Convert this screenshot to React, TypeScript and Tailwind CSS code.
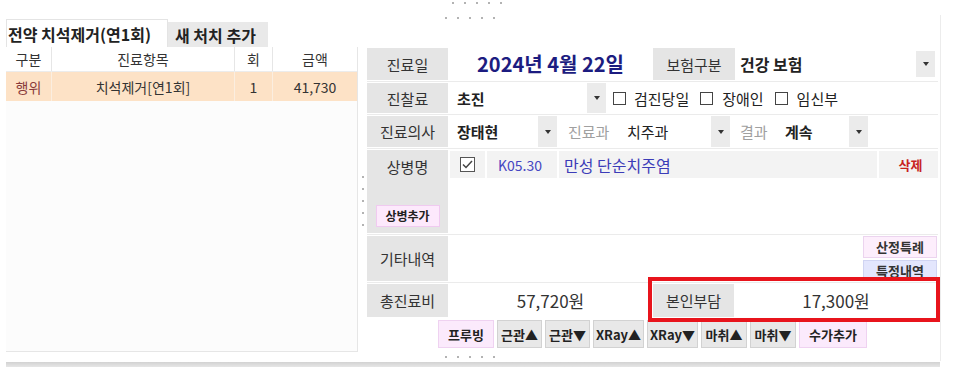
import React from 'react';

const font = { fontFamily: '"Noto Sans CJK KR", "Noto Sans", sans-serif' };

function Dots({ vertical = false }: { vertical?: boolean }) {
  return (
    <div className={vertical ? 'flex flex-col gap-[10px]' : 'flex gap-[10px]'}>
      {[0, 1, 2, 3, 4].map((i) => (
        <span key={i} className="block w-[2px] h-[2px] rounded-full bg-[#9a9a9a]" />
      ))}
    </div>
  );
}

function DropBox({ className = '' }: { className?: string }) {
  return (
    <div className={`w-[19px] self-stretch bg-[#ebebeb] flex items-center justify-center ${className}`}>
      <svg width="6" height="4" viewBox="0 0 6 4">
        <path d="M0 0 H6 L3 4 Z" fill="#333" />
      </svg>
    </div>
  );
}

function Check({ checked = false }: { checked?: boolean }) {
  if (checked) {
    return (
      <div className="w-[15px] h-[15px] border-[1.5px] border-[#555] bg-white flex items-center justify-center">
        <svg width="11" height="9" viewBox="0 0 11 9">
          <path d="M1 4.5 L4 7.5 L10 1" stroke="#444" strokeWidth="1.5" fill="none" />
        </svg>
      </div>
    );
  }
  return <div className="w-[13px] h-[13px] border-[1.5px] border-[#444] bg-white" />;
}

function Label({ children, wide = false }: { children: React.ReactNode; wide?: boolean }) {
  return (
    <div
      className={`${wide ? 'w-[82px]' : 'w-[81px]'} self-stretch bg-[#e5e5e5] flex items-center justify-center text-[15px] text-[#333]`}
    >
      {children}
    </div>
  );
}

const toolButtons = [
  { t: '프루빙', w: 'w-[56px]', pink: true },
  { t: '근관▲', w: 'w-[45px]' },
  { t: '근관▼', w: 'w-[45px]' },
  { t: 'XRay▲', w: 'w-[51px]' },
  { t: 'XRay▼', w: 'w-[51px]' },
  { t: '마취▲', w: 'w-[46px]' },
  { t: '마취▼', w: 'w-[46px]' },
  { t: '수가추가', w: 'w-[68px]', pink: true },
];

export default function App() {
  return (
    <div style={font} className="relative w-[966px] h-[377px] bg-white flex flex-col overflow-hidden text-[#333] leading-none">
      {/* top grip */}
      <div className="h-[15px] pl-[452px] pt-[2px]">
        <Dots />
      </div>

      <div className="flex h-[346px]">
        {/* left: treatment list */}
        <div className="w-[358px] pl-[6px] flex flex-col">
          <div className="mt-[4px] h-[28px] flex items-end">
            <div className="w-[162px] h-[28px] bg-white border border-b-0 border-[#e4e4e4] flex items-center pl-[1px] text-[16px] font-bold text-[#222]">
              전약 치석제거(연1회)
            </div>
            <div className="w-[100px] h-[25px] bg-[#e9e9e9] flex items-center pl-[7px] text-[16px] font-bold text-[#222]">
              새 처치 추가
            </div>
          </div>
          <div className="h-[305px] bg-[#fcfcfc] border-r border-b border-[#e6e6e6] flex flex-col">
            <div className="h-[25px] flex bg-white border-b border-[#ececec] text-[14px] text-[#333]">
              <div className="w-[46px] flex items-center justify-center border-r border-[#e6e6e6]">구분</div>
              <div className="w-[183px] flex items-center justify-center border-r border-[#e6e6e6]">진료항목</div>
              <div className="w-[38px] flex items-center justify-center border-r border-[#e6e6e6]">회</div>
              <div className="flex-1 flex items-center justify-center">금액</div>
            </div>
            <div className="h-[29px] flex bg-[#fde2c6] text-[14px] text-[#333]">
              <div className="w-[46px] flex items-center justify-center border-r border-[#fbeee0] text-[#8a3a3a]">행위</div>
              <div className="w-[183px] flex items-center justify-center border-r border-[#fbeee0]">치석제거[연1회]</div>
              <div className="w-[38px] flex items-center justify-center border-r border-[#fbeee0]">1</div>
              <div className="flex-1 flex items-center justify-center">41,730</div>
            </div>
          </div>
        </div>

        {/* splitter */}
        <div className="w-[8px] pl-[4px] pt-[161px]">
          <Dots vertical />
        </div>

        {/* right: visit detail */}
        <div className="w-[575px] border-r border-[#ececec] flex flex-col pl-[1px] pr-[2px]">
          <div className="h-[32px] pl-[78px] pt-[2px]">
            <Dots />
          </div>

          {/* 진료일 */}
          <div className="h-[35px] flex py-[1px] border-b border-[#ebebeb]">
            <Label>진료일</Label>
            <div className="w-[205px] flex items-center justify-center text-[20px] font-bold text-[#1c1c80]">
              2024년 4월 22일
            </div>
            <Label wide>보험구분</Label>
            <div className="flex-1 flex items-center pl-[5px] text-[16px] font-bold text-[#222]">건강 보험</div>
            <DropBox className="my-[3px] mr-[3px]" />
          </div>

          {/* 진찰료 */}
          <div className="h-[33px] flex py-[1px] border-b border-[#ebebeb]">
            <Label>진찰료</Label>
            <div className="w-[158px] flex">
              <div className="flex-1 flex items-center pl-[9px] text-[15px] font-bold text-[#222]">초진</div>
              <DropBox />
            </div>
            <div className="flex items-center pl-[7px] text-[15px] text-[#222]">
              <Check />
              <span className="ml-[8px]">검진당일</span>
              <span className="ml-[11px]"><Check /></span>
              <span className="ml-[9px]">장애인</span>
              <span className="ml-[11px]"><Check /></span>
              <span className="ml-[9px]">임신부</span>
            </div>
          </div>

          {/* 진료의사 */}
          <div className="h-[34px] flex py-[1px] border-b border-[#ebebeb]">
            <Label>진료의사</Label>
            <div className="w-[109px] flex">
              <div className="flex-1 flex items-center pl-[9px] text-[15px] font-bold text-[#222]">장태현</div>
              <DropBox />
            </div>
            <div className="flex items-center pl-[11px] w-[70px] text-[15px] text-[#a0a0a0]">진료과</div>
            <div className="w-[103px] flex">
              <div className="flex-1 flex items-center text-[15px] text-[#222]">치주과</div>
              <DropBox />
            </div>
            <div className="flex items-center pl-[10px] w-[55px] text-[15px] text-[#a0a0a0]">결과</div>
            <div className="w-[83px] flex">
              <div className="flex-1 flex items-center text-[15px] font-semibold text-[#222]">계속</div>
              <DropBox />
            </div>
          </div>

          {/* 상병명 */}
          <div className="h-[86px] flex py-[1px] border-b border-[#ebebeb]">
            <div className="w-[81px] self-stretch bg-[#e5e5e5] flex flex-col items-center justify-between pt-[9px] pb-[6px] text-[15px] text-[#333]">
              <span>상병명</span>
              <span className="w-[64px] h-[22px] bg-[#fde9fc] border border-[#f0caf0] flex items-center justify-center text-[12px] font-bold text-[#222]">
                상병추가
              </span>
            </div>
            <div className="flex-1 pl-[2px] pt-[1px]">
              <div className="h-[27px] flex gap-[2px]">
                <div className="w-[35px] bg-[#f3f3f3] flex items-center justify-center">
                  <Check checked />
                </div>
                <div className="w-[70px] bg-[#f3f3f3] flex items-center pl-[11px] text-[14px] text-[#4646c2]">K05.30</div>
                <div className="flex-1 bg-[#f3f3f3] flex items-center pl-[5px] text-[16px] text-[#3c3cb8]">만성 단순치주염</div>
                <div className="w-[59px] bg-[#f3f3f3] flex items-center justify-center pl-[4px] text-[13px] font-bold text-[#c8231e]">
                  삭제
                </div>
              </div>
            </div>
          </div>

          {/* 기타내역 */}
          <div className="h-[48px] flex py-[1px] border-b border-[#ebebeb]">
            <Label>기타내역</Label>
            <div className="flex-1 flex flex-col items-end gap-[2px] pr-[1px]">
              <div className="w-[74px] h-[22px] bg-[#fdeefc] border border-[#ecd4ef] flex items-center justify-center text-[13px] font-bold text-[#333]">
                산정특례
              </div>
              <div className="w-[74px] h-[22px] bg-[#e3e6fd] border border-[#d0d4f2] flex items-center justify-center text-[13px] font-bold text-[#333]">
                특정내역
              </div>
            </div>
          </div>

          {/* 총진료비 */}
          <div className="h-[35px] flex py-[1px]">
            <Label>총진료비</Label>
            <div className="w-[205px] flex items-center justify-center text-[17px] text-[#333]">57,720원</div>
            <Label>본인부담</Label>
            <div className="flex-1 flex items-center justify-center text-[17px] text-[#333]">17,300원</div>
          </div>

          {/* tool buttons */}
          <div className="mt-[2px] h-[28px] flex gap-[3px] pl-[71px]">
            {toolButtons.map((b) => (
              <div
                key={b.t}
                className={`${b.w} h-full flex items-center justify-center text-[13px] font-bold text-[#222] border ${
                  b.pink ? 'bg-[#fbeafc] border-[#efd2f1]' : 'bg-[#e8e8e8] border-[#d2d2d2]'
                }`}
              >
                {b.t}
              </div>
            ))}
          </div>

          <div className="mt-[8px] pl-[78px]">
            <Dots />
          </div>
        </div>
      </div>

      {/* bottom bar */}
      <div className="ml-[6px] mt-[1px] w-[934px] h-[5px] bg-gradient-to-b from-[#d2d2d2] to-[#e6e6e6]" />

      {/* highlight box */}
      <div className="absolute left-[648px] top-[277px] w-[292px] h-[45px] border-[4px] border-[#e8141c]" />
    </div>
  );
}
